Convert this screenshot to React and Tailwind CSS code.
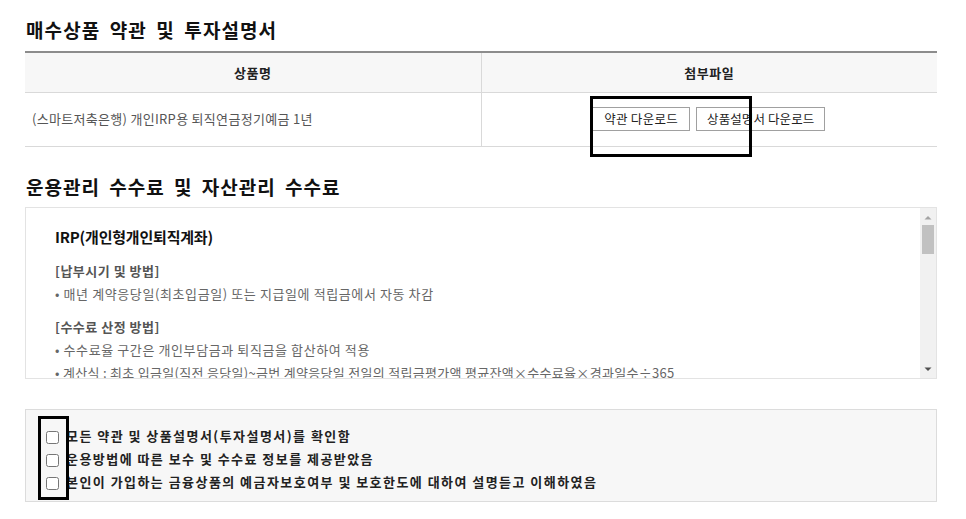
import React from 'react';

const font = { fontFamily: '"Noto Sans CJK KR", "Noto Sans", sans-serif' };

const agreements = [
    '모든 약관 및 상품설명서(투자설명서)를 확인함',
    '운용방법에 따른 보수 및 수수료 정보를 제공받았음',
    '본인이 가입하는 금융상품의 예금자보호여부 및 보호한도에 대하여 설명듣고 이해하였음',
];

export default function App() {
    return (
        <div className="relative w-[966px] h-[519px] bg-white px-[25px] pt-[17px] overflow-hidden" style={font}>
            {/* Section 1 */}
            <h2 className="text-[19px] leading-[25px] font-bold text-[#111] tracking-[1.1px] [word-spacing:4px] pl-[1px] mb-[9px]">
                매수상품 약관 및 투자설명서
            </h2>
            <table className="w-[912px] border-collapse border-t-2 border-[#8c8c8c] text-[13px]">
                <thead>
                    <tr className="bg-[#f7f7f7] h-[40px]">
                        <th className="w-[456px] border-r border-b border-[#d9d9d9] font-bold text-[#222] tracking-[0.5px]">상품명</th>
                        <th className="border-b border-[#d9d9d9] font-bold text-[#222] tracking-[0.5px]">첨부파일</th>
                    </tr>
                </thead>
                <tbody>
                    <tr className="h-[54px]">
                        <td className="border-r border-b border-[#d9d9d9] pl-[7px] text-[#555] tracking-[0.3px]">
                            (스마트저축은행) 개인IRP용 퇴직연금정기예금 1년
                        </td>
                        <td className="border-b border-[#d9d9d9]">
                            <div className="flex justify-center gap-[6px] pr-[1px]">
                                <button className="h-[24px] px-[11px] border border-[#a0a0a0] bg-white text-[12.5px] text-[#222] tracking-[0.3px]">약관 다운로드</button>
                                <button className="h-[24px] px-[10px] border border-[#a0a0a0] bg-white text-[12.5px] text-[#222] tracking-[0.1px]">상품설명서 다운로드</button>
                            </div>
                        </td>
                    </tr>
                </tbody>
            </table>

            {/* Section 2 */}
            <h2 className="mt-[27px] text-[19px] leading-[25px] font-bold text-[#111] tracking-[1px] [word-spacing:4px] pl-[1px] mb-[8px]">
                운용관리 수수료 및 자산관리 수수료
            </h2>
            <div className="flex w-[912px] h-[172px] border border-[#e3e3e3]">
                <div className="flex-1 overflow-hidden pl-[29px] pt-[19px] text-[13px] text-[#666] tracking-[0.6px]">
                    <p className="text-[15px] leading-[20px] font-bold text-[#111] tracking-[-0.2px]">IRP(개인형개인퇴직계좌)</p>
                    <p className="mt-[12px] leading-[23px] font-bold text-[#555] tracking-[0.5px]">[납부시기 및 방법]</p>
                    <p className="leading-[23px]">• 매년 계약응당일(최초입금일) 또는 지급일에 적립금에서 자동 차감</p>
                    <p className="mt-[10px] leading-[23px] font-bold text-[#555] tracking-[0.5px]">[수수료 산정 방법]</p>
                    <p className="leading-[23px]">• 수수료율 구간은 개인부담금과 퇴직금을 합산하여 적용</p>
                    <p className="leading-[23px] whitespace-nowrap tracking-[0.3px]">• 계산식 : 최초 입금일(직전 응당일)~금번 계약응당일 전일의 적립금평가액 평균잔액×수수료율×경과일수÷365</p>
                </div>
                {/* scrollbar */}
                <div className="w-[16px] bg-[#f1f1f1] flex flex-col items-center">
                    <svg width="16" height="17" viewBox="0 0 16 17" className="shrink-0">
                        <path d="M4.5 11.5 L8 8 L11.5 11.5 Z" fill="#a3a3a3" />
                    </svg>
                    <div className="w-[12px] h-[29px] bg-[#c1c1c1]" />
                    <div className="flex-1" />
                    <svg width="16" height="17" viewBox="0 0 16 17" className="shrink-0">
                        <path d="M4.5 6.5 L8 10 L11.5 6.5 Z" fill="#505050" />
                    </svg>
                </div>
            </div>

            {/* Agreements */}
            <div className="mt-[30px] w-[912px] h-[93px] bg-[#f7f7f7] border border-[#dcdcdc] pl-[20px] pt-[15px]">
                {agreements.map((text, i) => (
                    <label key={i} className="flex items-center h-[23px] text-[13px] font-bold text-[#222] tracking-[1.45px]">
                        <input type="checkbox" className="w-[13px] h-[13px] m-0 mr-[7px] mt-[2px]" />
                        {text}
                    </label>
                ))}
            </div>

            {/* annotation boxes */}
            <div className="absolute left-[590px] top-[96px] w-[162px] h-[61px] border-[3px] border-black pointer-events-none" />
            <div className="absolute left-[38px] top-[416px] w-[31px] h-[84px] border-[3px] border-black pointer-events-none" />
        </div>
    );
}
